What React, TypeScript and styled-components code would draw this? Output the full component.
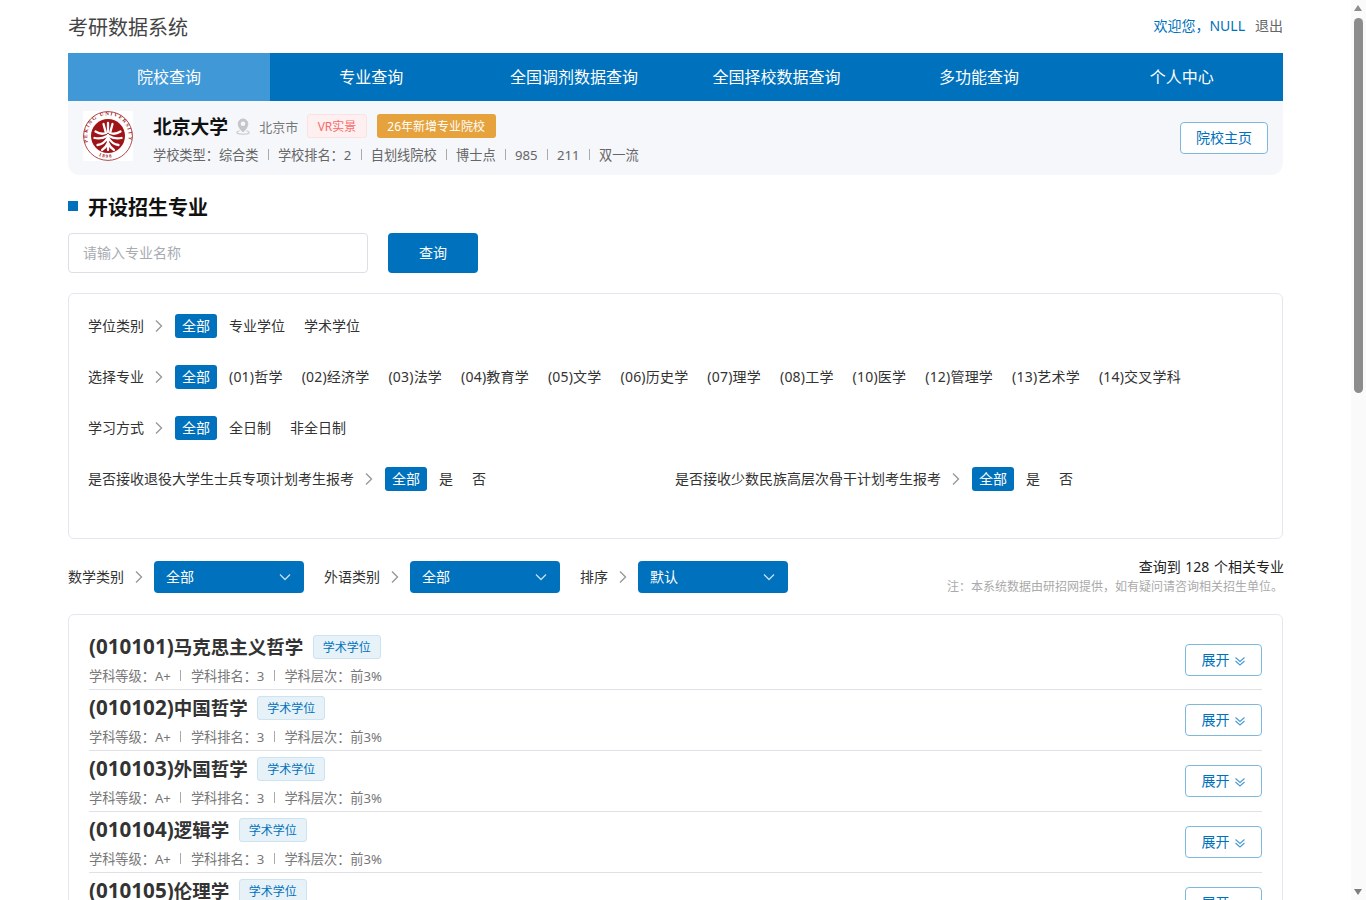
import React from 'react';
import styled, { createGlobalStyle } from 'styled-components';

const primary = '#0071bc';

const GlobalStyle = createGlobalStyle`
  html, body {
    margin: 0;
    padding: 0;
    background: #fff;
    color: #333;
    font-family: "Noto Sans", "Noto Sans CJK SC", sans-serif;
    font-size: 14px;
  }
  * {
    box-sizing: border-box;
  }
`;

const Page = styled.div`
  width: 1215px;
  margin: 0 0 240px 68px;
`;

const ScrollRail = styled.div`
  position: fixed;
  top: 0;
  right: 0;
  bottom: 0;
  width: 15px;
  background: #fafafa;
`;

const ScrollThumb = styled.div`
  position: absolute;
  top: 18px;
  left: 3px;
  width: 9px;
  height: 375px;
  background: #8c8c8c;
  border-radius: 5px;
`;

const ScrollArrow = styled.div<{ $down?: boolean }>`
  position: absolute;
  left: 3px;
  width: 0;
  height: 0;
  border-left: 4.5px solid transparent;
  border-right: 4.5px solid transparent;
  ${p => (p.$down
    ? 'bottom: 5px; border-top: 6px solid #7d7d7d;'
    : 'top: 5px; border-bottom: 6px solid #8c8c8c;')}
`;

const Header = styled.header`
  height: 53px;
  display: flex;
  align-items: center;
  justify-content: space-between;
`;

const SiteTitle = styled.h1`
  margin: 0;
  font-size: 20px;
  font-weight: 400;
  color: #444;
`;

const UserBox = styled.div`
  display: flex;
  gap: 10px;
  font-size: 14px;
  padding-bottom: 4px;
`;

const UserName = styled.span`
  color: ${primary};
`;

const Logout = styled.span`
  color: #666;
`;

const Nav = styled.nav`
  display: grid;
  grid-template-columns: 202px repeat(5, 1fr);
  height: 48px;
  background: ${primary};
`;

const NavItem = styled.a<{ $active?: boolean }>`
  display: flex;
  align-items: center;
  justify-content: center;
  padding-bottom: 2px;
  color: #fff;
  font-size: 16px;
  background: ${p => (p.$active ? '#4098d7' : 'transparent')};
`;

const SchoolCard = styled.section`
  height: 74px;
  padding: 10px 15px;
  display: flex;
  align-items: flex-start;
  background: #f5f7fb;
  border-radius: 0 0 12px 12px;
`;

const SchoolInfo = styled.div`
  flex: 1;
  margin-left: 20px;
`;

const SchoolTop = styled.div`
  display: flex;
  align-items: center;
  height: 30px;
`;

const SchoolName = styled.h2`
  margin: 0;
  font-size: 18.8px;
  font-weight: 700;
  color: #111;
`;

const City = styled.span`
  display: flex;
  align-items: center;
  margin-left: 8px;
  gap: 9px;
  font-size: 13px;
  color: #777;
`;

const VrTag = styled.span`
  margin-left: 9px;
  height: 24px;
  padding: 0 9.5px;
  display: flex;
  align-items: center;
  font-size: 12px;
  color: #f56c6c;
  background: #fef0f0;
  border: 1px solid #fde2e2;
  border-radius: 3px;
`;

const NewTag = styled.span`
  margin-left: 10px;
  height: 24px;
  padding: 0 10.5px;
  display: flex;
  align-items: center;
  font-size: 12px;
  color: #fff;
  background: #e6a23c;
  border-radius: 3px;
`;

const Divider = styled.i`
  width: 1px;
  height: 11px;
  margin: 0 9.5px;
  background: #aaa;
`;

const MetaLine = styled.div`
  display: flex;
  align-items: center;
  padding-bottom: 1px;
  font-size: 13.2px;
  color: #666;
  white-space: nowrap;
`;

const SchoolMeta = styled(MetaLine)`
  margin-top: 3px;
  height: 22px;
  ${Divider} {
    margin: 0 9.2px;
  }
`;

const OutlineButton = styled.button`
  width: 88px;
  height: 32px;
  padding: 0 0 2px;
  display: flex;
  align-items: center;
  justify-content: center;
  gap: 4px;
  font: inherit;
  font-size: 14px;
  color: ${primary};
  background: #fff;
  border: 1px solid #7fb8de;
  border-radius: 4px;
`;

const HomeButton = styled(OutlineButton)`
  margin-top: 11px;
`;

const SectionTitle = styled.h3`
  margin: 18px 0 0;
  height: 28px;
  padding-bottom: 2px;
  display: flex;
  align-items: center;
  gap: 10px;
  font-size: 20px;
  font-weight: 700;
  color: #111;
  &::before {
    content: '';
    width: 10px;
    height: 10px;
    background: ${primary};
  }
`;

const SearchRow = styled.div`
  display: flex;
  gap: 20px;
  margin-top: 12px;
`;

const SearchInput = styled.input`
  width: 300px;
  height: 40px;
  padding: 0 14px 2px;
  font: inherit;
  color: #333;
  background: #fff;
  border: 1px solid #dcdfe6;
  border-radius: 4px;
  outline: none;
  &::placeholder {
    color: #a8abb2;
  }
`;

const SearchButton = styled.button`
  width: 90px;
  height: 40px;
  padding: 0 0 2px;
  font: inherit;
  color: #fff;
  background: ${primary};
  border: 0;
  border-radius: 4px;
`;

const FilterBox = styled.section`
  height: 246px;
  margin-top: 20px;
  padding: 20px 20px 0 19px;
  display: flex;
  flex-direction: column;
  gap: 27px;
  border: 1px solid #e4e7ed;
  border-radius: 6px;
`;

const FilterRow = styled.div`
  display: flex;
  align-items: center;
  height: 24px;
`;

const TwoColumns = styled.div`
  display: grid;
  grid-template-columns: 587px 1fr;
`;

const FilterLabel = styled.span`
  padding-bottom: 2px;
  color: #333;
  white-space: nowrap;
`;

const Arrow = styled.svg`
  width: 14px;
  height: 14px;
  margin: 0 9px 0 8px;
  flex: none;
  fill: none;
  stroke: #999;
  stroke-width: 1.4;
`;

const Options = styled.div<{ $numbered?: boolean }>`
  display: flex;
  gap: 5px;
  letter-spacing: ${p => (p.$numbered ? '0.2px' : 'normal')};
`;

const Option = styled.span<{ $active?: boolean }>`
  height: 24px;
  padding: 0 7px 2px;
  display: flex;
  align-items: center;
  border-radius: 3px;
  white-space: nowrap;
  letter-spacing: ${p => (p.$active ? 'normal' : 'inherit')};
  color: ${p => (p.$active ? '#fff' : '#333')};
  background: ${p => (p.$active ? primary : 'transparent')};
`;

const SortBar = styled.div`
  margin-top: 22px;
  height: 32px;
  display: flex;
  align-items: center;
`;

const SortGroup = styled.div`
  display: flex;
  align-items: center;
  margin-right: 20px;
`;

const SelectBox = styled.div`
  width: 150px;
  height: 32px;
  margin-left: -1px;
  padding: 0 12px 2px;
  display: flex;
  align-items: center;
  justify-content: space-between;
  color: #fff;
  background: ${primary};
  border-radius: 4px;
`;

const SelectChevron = styled.svg`
  width: 14px;
  height: 14px;
  margin-top: 2px;
  fill: none;
  stroke: #c5dff1;
  stroke-width: 1.3;
`;

const Summary = styled.div`
  margin-left: auto;
  text-align: right;
  white-space: nowrap;
`;

const SummaryCount = styled.div`
  margin-right: -1px;
  line-height: 20px;
  word-spacing: 1px;
  color: #222;
`;

const SummaryNote = styled.div`
  line-height: 20px;
  font-size: 12px;
  color: #aaa;
`;

const ExpandButton = styled(OutlineButton)`
  width: 77px;
`;

const ListBox = styled.section`
  margin-top: 21px;
  padding: 14px 20px 0;
  border: 1px solid #e4e7ed;
  border-radius: 6px;
`;

const MajorRow = styled.article`
  height: 61px;
  display: flex;
  align-items: center;
  justify-content: space-between;
  border-bottom: 1px solid #dfe1e6;
  &:first-child ${ExpandButton} {
    margin-top: 2px;
  }
`;

const MajorTitleLine = styled.div`
  display: flex;
  align-items: center;
  gap: 9.5px;
  height: 30px;
  padding-bottom: 2px;
`;

const MajorName = styled.h4`
  margin: 0;
  font-size: 18.5px;
  font-weight: 700;
  color: #333;
`;

const MajorCode = styled.span`
  font-size: 20.6px;
`;

const DegreeTag = styled.span`
  height: 24px;
  margin-top: 2px;
  padding: 0 9px;
  display: flex;
  align-items: center;
  font-size: 12px;
  color: ${primary};
  background: #e6f1f8;
  border: 1px solid #cce3f2;
  border-radius: 3px;
`;

const MajorMeta = styled(MetaLine)`
  height: 24px;
  padding: 2px 0 0;
  color: #777;
`;

const DoubleChevron = styled.svg`
  width: 12px;
  height: 12px;
  margin-top: 3px;
  fill: none;
  stroke: #4c9ad2;
  stroke-width: 1.1;
`;

const ArrowIcon = () => (
  <Arrow viewBox="0 0 14 14">
    <path d="M4 1.5 9.5 7 4 12.5" />
  </Arrow>
);

const PkuLogo = () => (
  <svg width="50" height="50" viewBox="0 0 50 50" style={{ flex: 'none', background: '#fff' }}>
    <defs>
      <path id="pku-ring" d="M5.4 32a20.8 20.8 0 1 1 39.2 0" />
      <path id="pku-year" d="M15.5 44.6a21.6 21.6 0 0 0 19 0" />
    </defs>
    <circle cx="25" cy="25" r="24.4" fill="none" stroke="#9e1b1e" strokeWidth="0.8" />
    <circle cx="25" cy="25" r="17" fill="#a01418" />
    <text fontSize="5.2" fontWeight="700" fill="#9e1b1e" fontFamily="Liberation Serif, serif" letterSpacing="1.3">
      <textPath href="#pku-ring" startOffset="1%">PEKING UNIVERSITY</textPath>
    </text>
    <text fontSize="5" fontWeight="700" fill="#9e1b1e" fontFamily="Liberation Serif, serif" letterSpacing="1.2">
      <textPath href="#pku-year">1898</textPath>
    </text>
    <g fill="none" stroke="#fff" strokeLinecap="round" strokeWidth="2.3">
      <path d="M25 12v9M20.5 13l2 7.5M29.5 13l-2 7.5" />
      <path d="M12.5 20.5Q18 24 23 22M37.5 20.5Q32 24 27 22" />
      <path d="M11.5 27Q18 28.5 24 25M38.5 27Q32 28.5 26 25" />
      <path d="M25 24v15" />
      <path d="M14.5 34Q21 33 24.5 27M35.5 34Q29 33 25.5 27" />
      <path d="M19 39Q23 36.5 24.5 32.5M31 39Q27 36.5 25.5 32.5" />
    </g>
  </svg>
);

const PinIcon = () => (
  <svg width="14" height="17" viewBox="0 0 14 17" fill="none" stroke="#c4c6c9">
    <path d="M3.5 12.8C1.7 13.2.8 13.9.8 14.6c0 1 2.8 1.7 6.2 1.7s6.2-.7 6.2-1.7c0-.7-.9-1.4-2.7-1.8" strokeWidth="1.1" />
    <path d="M7 14s-4.8-4-4.8-8.2a4.8 4.8 0 0 1 9.6 0C11.8 10 7 14 7 14Z" fill="#c4c6c9" />
    <circle cx="7" cy="5.8" r="2.3" fill="#f5f7fb" stroke="none" />
  </svg>
);

const navItems = ['院校查询', '专业查询', '全国调剂数据查询', '全国择校数据查询', '多功能查询', '个人中心'];
const schoolFacts = ['学校类型：综合类', '学校排名：2', '自划线院校', '博士点', '985', '211', '双一流'];
const subjects = ['(01)哲学', '(02)经济学', '(03)法学', '(04)教育学', '(05)文学', '(06)历史学', '(07)理学', '(08)工学', '(10)医学', '(12)管理学', '(13)艺术学', '(14)交叉学科'];
const majors = [
  ['(010101)', '马克思主义哲学'], ['(010102)', '中国哲学'], ['(010103)', '外国哲学'], ['(010104)', '逻辑学'], ['(010105)', '伦理学'],
  ['(010106)', '美学'], ['(010107)', '宗教学'], ['(010108)', '科学技术哲学'], ['(020101)', '政治经济学'], ['(020102)', '经济思想史'],
  ['(020103)', '经济史'], ['(020104)', '西方经济学'], ['(020105)', '世界经济'], ['(020106)', '人口、资源与环境经济学'], ['(020201)', '国民经济学'],
  ['(020202)', '区域经济学'], ['(020203)', '财政学'], ['(020204)', '金融学'], ['(020205)', '产业经济学'], ['(020206)', '国际贸易学'],
];

const FilterGroup = ({ label, options, numbered }: { label: string; options: string[]; numbered?: boolean }) => (
  <FilterRow>
    <FilterLabel>{label}</FilterLabel>
    <ArrowIcon />
    <Options $numbered={numbered}>
      <Option $active>全部</Option>
      {options.map(option => <Option key={option}>{option}</Option>)}
    </Options>
  </FilterRow>
);

const SortSelect = ({ label, value }: { label: string; value: string }) => (
  <SortGroup>
    <FilterLabel>{label}</FilterLabel>
    <ArrowIcon />
    <SelectBox>
      {value}
      <SelectChevron viewBox="0 0 14 14">
        <path d="M2 4.5 7 9.5 12 4.5" />
      </SelectChevron>
    </SelectBox>
  </SortGroup>
);

const App = () => (
  <Page>
    <GlobalStyle />
    <Header>
      <SiteTitle>考研数据系统</SiteTitle>
      <UserBox>
        <UserName>欢迎您，NULL</UserName>
        <Logout>退出</Logout>
      </UserBox>
    </Header>
    <Nav>
      {navItems.map((item, i) => <NavItem key={item} $active={i === 0}>{item}</NavItem>)}
    </Nav>
    <SchoolCard>
      <PkuLogo />
      <SchoolInfo>
        <SchoolTop>
          <SchoolName>北京大学</SchoolName>
          <City><PinIcon />北京市</City>
          <VrTag>VR实景</VrTag>
          <NewTag>26年新增专业院校</NewTag>
        </SchoolTop>
        <SchoolMeta>
          {schoolFacts.map((fact, i) => (
            <React.Fragment key={fact}>
              {i > 0 && <Divider />}
              {fact}
            </React.Fragment>
          ))}
        </SchoolMeta>
      </SchoolInfo>
      <HomeButton>院校主页</HomeButton>
    </SchoolCard>
    <SectionTitle>开设招生专业</SectionTitle>
    <SearchRow>
      <SearchInput placeholder="请输入专业名称" />
      <SearchButton>查询</SearchButton>
    </SearchRow>
    <FilterBox>
      <FilterGroup label="学位类别" options={['专业学位', '学术学位']} />
      <FilterGroup label="选择专业" options={subjects} numbered />
      <FilterGroup label="学习方式" options={['全日制', '非全日制']} />
      <TwoColumns>
        <FilterGroup label="是否接收退役大学生士兵专项计划考生报考" options={['是', '否']} />
        <FilterGroup label="是否接收少数民族高层次骨干计划考生报考" options={['是', '否']} />
      </TwoColumns>
    </FilterBox>
    <SortBar>
      <SortSelect label="数学类别" value="全部" />
      <SortSelect label="外语类别" value="全部" />
      <SortSelect label="排序" value="默认" />
      <Summary>
        <SummaryCount>查询到 128 个相关专业</SummaryCount>
        <SummaryNote>注：本系统数据由研招网提供，如有疑问请咨询相关招生单位。</SummaryNote>
      </Summary>
    </SortBar>
    <ListBox>
      {majors.map(([code, name]) => (
        <MajorRow key={code}>
          <div>
            <MajorTitleLine>
              <MajorName><MajorCode>{code}</MajorCode>{name}</MajorName>
              <DegreeTag>学术学位</DegreeTag>
            </MajorTitleLine>
            <MajorMeta>
              学科等级：A+<Divider />学科排名：3<Divider />学科层次：前3%
            </MajorMeta>
          </div>
          <ExpandButton>
            展开
            <DoubleChevron viewBox="0 0 12 12">
              <path d="M1.5 2.5 6 6.5 10.5 2.5M1.5 6 6 10 10.5 6" />
            </DoubleChevron>
          </ExpandButton>
        </MajorRow>
      ))}
    </ListBox>
    <ScrollRail>
      <ScrollArrow />
      <ScrollThumb />
      <ScrollArrow $down />
    </ScrollRail>
  </Page>
);

export default App;
